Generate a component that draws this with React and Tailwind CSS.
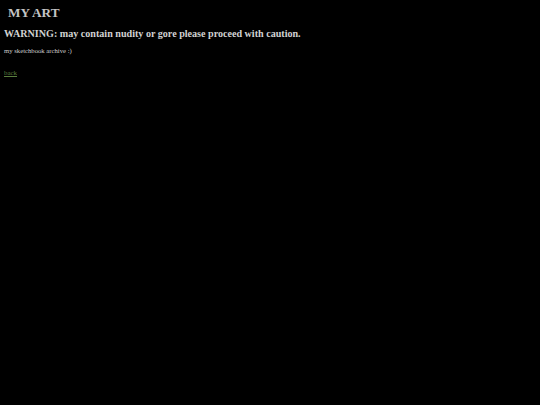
export default function App() {
  return (
    <div className="min-h-[405px] w-full bg-black px-[4px] pt-[5px]" style={{ fontFamily: '"Liberation Serif", "Times New Roman", serif' }}>
      <h1 className="pl-[4px] text-[13.2px] font-bold leading-[15px] text-[#c4c4c4]">MY ART</h1>
      <h2 className="mt-[8px] text-[10.1px] font-bold leading-[12px] text-[#d2d2d2]">WARNING: may contain nudity or gore please proceed with caution.</h2>
      <p className="mt-[7px] text-[6.7px] leading-[8px] text-[#cfcfcf]">my sketchbook archive :)</p>
      <a href="#" className="mt-[14px] block w-fit text-[6.9px] leading-[8px] text-[#5a7e3e] underline">back</a>
    </div>
  );
}
